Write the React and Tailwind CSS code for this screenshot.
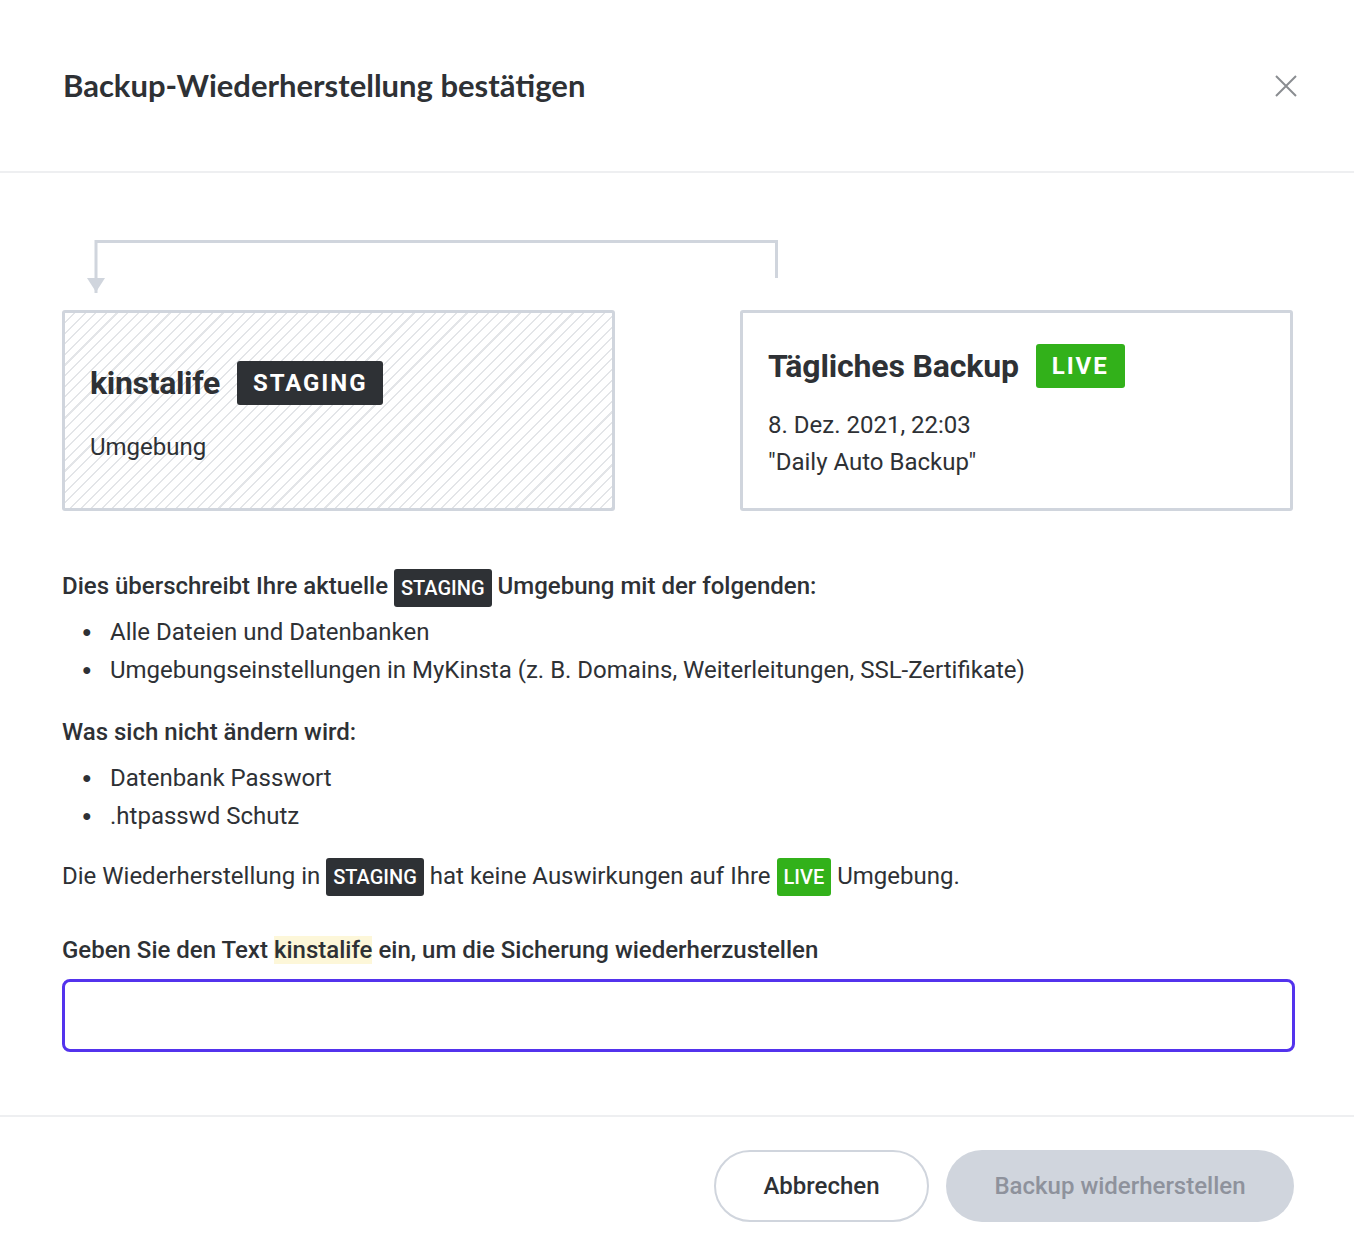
import React from "react";

const Badge = ({ children, color = "dark", size = "sm" }) => {
  const bg = color === "dark" ? "bg-[#2e3135]" : "bg-[#32b11a]";
  if (size === "lg") {
    return (
      <span className={`${bg} inline-flex items-center justify-center h-[44px] px-[16px] rounded-[3px] text-white font-bold text-[24px] tracking-[0.08em] leading-none`}>
        {children}
      </span>
    );
  }
  return (
    <span className={`${bg} inline-flex items-center justify-center h-[38px] px-[7px] rounded-[3px] text-white font-medium text-[20px] leading-none align-middle mx-[6px]`}>
      {children}
    </span>
  );
};

export default function App() {
  return (
    <div className="w-full min-h-[1252px] bg-white text-[#2e3135]" style={{ fontFamily: "Roboto, 'Liberation Sans', sans-serif" }}>
      {/* Header */}
      <div className="h-[173px] flex items-center justify-between pl-[63px] pr-[56px] border-b-2 border-[#eeeff1]">
        <h1 className="text-[31px] font-bold text-[#2e3135]" style={{ fontFamily: "Lato, 'Noto Sans', sans-serif" }}>
          Backup-Wiederherstellung bestätigen
        </h1>
        <button className="w-[24px] h-[24px] flex items-center justify-center text-[#8a8d91]">
          <svg width="22" height="22" viewBox="0 0 22 22" fill="none" stroke="currentColor" strokeWidth="2">
            <path d="M1 1L21 21M21 1L1 21" />
          </svg>
        </button>
      </div>

      {/* Body */}
      <div className="pl-[62px] pr-[59px] pt-[65px]">
        <svg width="720" height="56" viewBox="0 0 720 56" className="block ml-[24px]">
          <path d="M10 55V3.5H690.5V40" fill="none" stroke="#d0d5dd" strokeWidth="3" />
          <path d="M1 40H19L10 54Z" fill="#d0d5dd" />
        </svg>
        <div className="mt-[16px] mr-[2px] grid grid-cols-2 gap-[125px]">
          <div className="h-[201px] border-[3px] border-[#d0d5dd] rounded-[3px] px-[25px] pt-[48px] bg-[repeating-linear-gradient(135deg,#ffffff_0px,#ffffff_6px,#e3e5e8_6px,#e3e5e8_7.5px)]">
            <div className="flex items-center gap-[17px]">
              <span className="text-[32px] font-bold leading-none tracking-[-0.01em]">kinstalife</span>
              <Badge size="lg">STAGING</Badge>
            </div>
            <div className="mt-[24px] text-[24px]">Umgebung</div>
          </div>
          <div className="h-[201px] border-[3px] border-[#d0d5dd] rounded-[3px] px-[25px] pt-[31px]">
            <div className="flex items-center gap-[17px]">
              <span className="text-[32px] font-bold leading-none tracking-[-0.005em]">Tägliches Backup</span>
              <Badge size="lg" color="green">LIVE</Badge>
            </div>
            <div className="mt-[19px] text-[24px] leading-[37px]">
              <div>8. Dez. 2021, 22:03</div>
              <div>"Daily Auto Backup"</div>
            </div>
          </div>
        </div>

        <div className="mt-[56px] text-[24px]">
          <p className="font-medium leading-[38px]">
            Dies überschreibt Ihre aktuelle<Badge>STAGING</Badge>Umgebung mit der folgenden:
          </p>
          <ul className="mt-[6px] leading-[38px]">
            <li className="flex items-center"><span className="w-[48px] pl-[20px] text-[16px]">●</span>Alle Dateien und Datenbanken</li>
            <li className="flex items-center"><span className="w-[48px] pl-[20px] text-[16px]">●</span>Umgebungseinstellungen in MyKinsta (z. B. Domains, Weiterleitungen, SSL-Zertifikate)</li>
          </ul>
          <p className="mt-[24px] font-medium leading-[38px]">Was sich nicht ändern wird:</p>
          <ul className="mt-[8px] leading-[38px]">
            <li className="flex items-center"><span className="w-[48px] pl-[20px] text-[16px]">●</span>Datenbank Passwort</li>
            <li className="flex items-center"><span className="w-[48px] pl-[20px] text-[16px]">●</span>.htpasswd Schutz</li>
          </ul>
          <p className="mt-[22px] leading-[38px]">
            Die Wiederherstellung in<Badge>STAGING</Badge>hat keine Auswirkungen auf Ihre<Badge color="green">LIVE</Badge>Umgebung.
          </p>
          <p className="mt-[35px] font-medium leading-[38px]">
            Geben Sie den Text <span className="bg-[#fdf7d9]">kinstalife</span> ein, um die Sicherung wiederherzustellen
          </p>
          <input className="mt-[10px] block w-full h-[73px] border-[3px] border-[#5333ed] rounded-[8px] outline-none px-4 text-[24px]" />
        </div>
      </div>

      {/* Footer */}
      <div className="mt-[63px] border-t-2 border-[#eeeff1] h-[136px] flex items-start justify-end gap-[17px] pt-[33px] pr-[60px]">
        <button className="w-[215px] h-[72px] rounded-full border-2 border-[#d0d5dd] bg-white text-[24px] font-medium text-[#2e3135]">
          Abbrechen
        </button>
        <button className="w-[348px] h-[72px] rounded-full bg-[#d0d5dd] text-[24px] font-medium text-[#8e929c]">
          Backup widerherstellen
        </button>
      </div>
    </div>
  );
}
